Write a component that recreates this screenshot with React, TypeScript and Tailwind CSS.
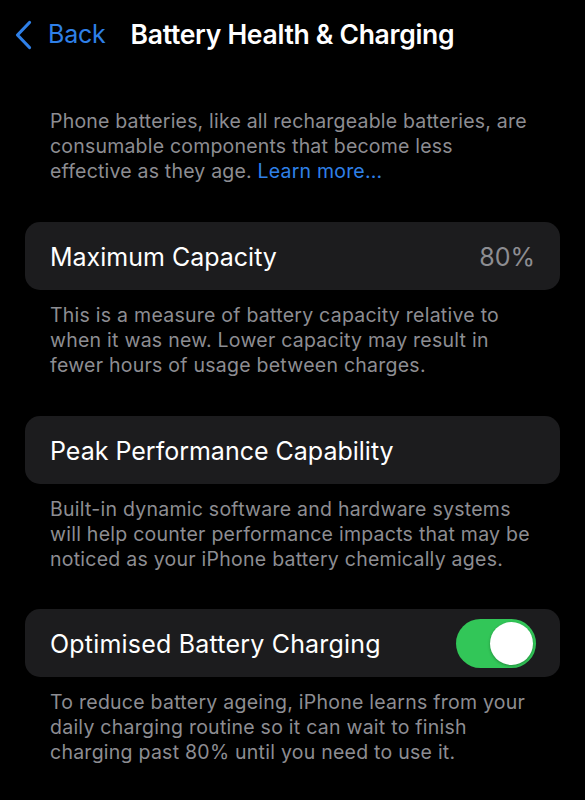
import React from "react";

const font = { fontFamily: 'Inter, "Noto Sans", "Liberation Sans", sans-serif' };

function Chevron() {
  return (
    <svg width="19" height="30" viewBox="0 0 19 30" className="shrink-0">
      <path d="M15.5 2.5 L3.5 15 L15.5 27.5" fill="none" stroke="#2f80e8" strokeWidth="3.2" strokeLinecap="round" strokeLinejoin="round" />
    </svg>
  );
}

function Toggle() {
  return (
    <div className="w-[80px] h-[49px] rounded-full bg-[#32c658] p-[3px] flex justify-end items-center">
      <div className="w-[43px] h-[43px] rounded-full bg-white shadow-[0_1px_3px_rgba(0,0,0,0.3)]" />
    </div>
  );
}

function Footer({ children }: { children: React.ReactNode }) {
  return (
    <p className="px-[50px] pt-[13px] text-[19.5px] leading-[25px] text-[#8d8d92] tracking-[0.25px]">{children}</p>
  );
}

export default function App() {
  return (
    <div style={font} className="w-[585px] h-[800px] bg-black text-white overflow-hidden">
      <header className="flex items-center h-[70px] pl-[14px]">
        <div className="flex items-center gap-[15px]">
          <Chevron />
          <span className="text-[25px] text-[#2f80e8] tracking-[-0.2px]">Back</span>
        </div>
        <h1 className="ml-[25px] text-[26.5px] font-semibold tracking-[-0.3px]">Battery Health &amp; Charging</h1>
      </header>

      <p className="px-[50px] pt-[39px] text-[19.5px] leading-[25px] text-[#8d8d92] tracking-[0.2px]">
        Phone batteries, like all rechargeable batteries, are consumable components that become less effective as they age.{" "}
        <span className="text-[#2f80e8]">Learn more...</span>
      </p>

      <div className="mx-[25px] mt-[38px] h-[68px] rounded-[15px] bg-[#1c1c1e] flex items-center justify-between pl-[25px] pr-[25px] pt-[3px]">
        <span className="text-[25px]">Maximum Capacity</span>
        <span className="text-[25px] text-[#8d8d92]">80%</span>
      </div>
      <Footer>
        This is a measure of battery capacity relative to when it was new. Lower capacity may result in fewer hours of usage between charges.
      </Footer>

      <div className="mx-[25px] mt-[38px] h-[68px] rounded-[15px] bg-[#1c1c1e] flex items-center pl-[25px] pt-[3px]">
        <span className="text-[25px]">Peak Performance Capability</span>
      </div>
      <Footer>
        Built-in dynamic software and hardware systems will help counter performance impacts that may be noticed as your iPhone battery chemically ages.
      </Footer>

      <div className="mx-[25px] mt-[37px] h-[68px] rounded-[15px] bg-[#1c1c1e] flex items-center justify-between pl-[25px] pr-[24px]">
        <span className="text-[25px] tracking-[0.2px] pt-[3px]">Optimised Battery Charging</span>
        <Toggle />
      </div>
      <Footer>
        To reduce battery ageing, iPhone learns from your daily charging routine so it can wait to finish charging past 80% until you need to use it.
      </Footer>
    </div>
  );
}
